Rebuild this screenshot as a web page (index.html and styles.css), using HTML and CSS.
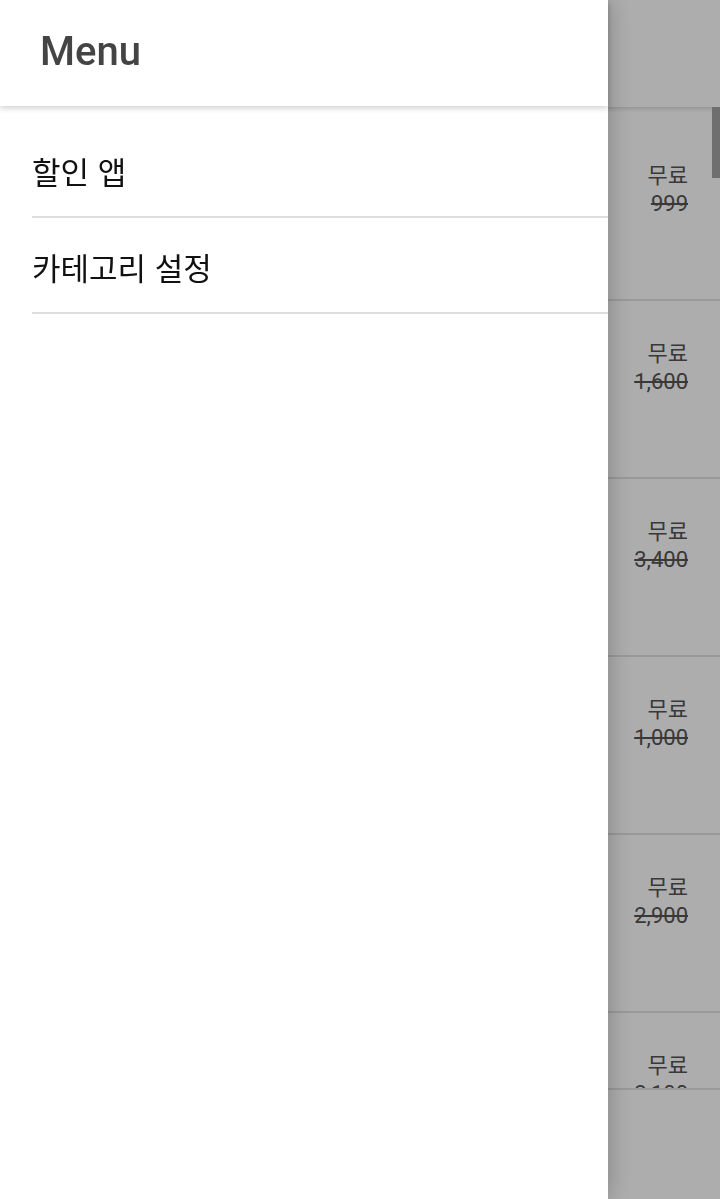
FILE: index.html
```html
<!DOCTYPE html>
<html lang="ko">
<head>
    <meta charset="UTF-8">
    <meta name="viewport" content="width=device-width, initial-scale=1.0">
    <title>Menu</title>
    <link rel="stylesheet" href="styles.css">
</head>
<body>
    <div class="app">
        <header class="app-bar"></header>
        <div class="deal-list">
            <div class="deal-row"><div class="price"><span class="now">무료</span><s class="was">999</s></div></div>
            <div class="deal-row"><div class="price"><span class="now">무료</span><s class="was">1,600</s></div></div>
            <div class="deal-row"><div class="price"><span class="now">무료</span><s class="was">3,400</s></div></div>
            <div class="deal-row"><div class="price"><span class="now">무료</span><s class="was">1,000</s></div></div>
            <div class="deal-row"><div class="price"><span class="now">무료</span><s class="was">2,900</s></div></div>
            <div class="deal-row"><div class="price"><span class="now">무료</span><s class="was">2,100</s></div></div>
        </div>
        <div class="scroll-thumb"></div>
        <footer class="bottom-bar"></footer>
    </div>

    <div class="scrim"></div>

    <nav class="drawer">
        <div class="drawer-header">Menu</div>
        <ul class="drawer-list">
            <li class="drawer-item">할인 앱</li>
            <li class="drawer-item">카테고리 설정</li>
        </ul>
    </nav>
</body>
</html>
```

FILE: styles.css
```css
body {
    margin: 0;
    background: #fff;
    font-family: Roboto, "Noto Sans CJK KR", sans-serif;
    overflow: hidden;
    height: 1199px;
}

.app {
    height: 1199px;
    overflow: hidden;
}

.app-bar {
    height: 107px;
    background: #fff;
    box-shadow: 0 2px 4px rgba(0, 0, 0, 0.15);
    position: relative;
    z-index: 1;
}

.deal-list {
    padding-top: 16px;
}

.deal-row {
    height: 178px;
    box-sizing: border-box;
    border-bottom: 2px solid #e2e2e2;
    display: flex;
    justify-content: flex-end;
    padding: 39px 32px 0 0;
}

.price {
    display: flex;
    flex-direction: column;
    align-items: flex-end;
    font-size: 22px;
    line-height: 28px;
    color: #555;
}

.was {
    text-decoration: line-through;
}

.scroll-thumb {
    position: fixed;
    top: 107px;
    right: 0;
    width: 8px;
    height: 71px;
    background: #a4a4a4;
    z-index: 1;
}

.bottom-bar {
    position: fixed;
    left: 0;
    right: 0;
    bottom: 0;
    height: 109px;
    background: #fff;
    border-top: 2px solid #e2e2e2;
    z-index: 1;
}

.scrim {
    position: fixed;
    top: 0;
    left: 0;
    right: 0;
    bottom: 0;
    background: rgba(0, 0, 0, 0.32);
    z-index: 5;
}

.drawer {
    position: fixed;
    top: 0;
    left: 0;
    bottom: 0;
    width: 608px;
    background: #fff;
    box-shadow: 0 0 24px rgba(0, 0, 0, 0.26);
    z-index: 6;
}

.drawer-header {
    height: 106px;
    box-sizing: border-box;
    padding: 0 0 4px 40px;
    display: flex;
    align-items: center;
    font-size: 40px;
    font-weight: 500;
    color: #444;
    box-shadow: 0 2px 6px rgba(0, 0, 0, 0.2);
    position: relative;
}

.drawer-list {
    list-style: none;
    margin: 0;
    padding: 16px 0 0 32px;
}

.drawer-item {
    height: 96px;
    box-sizing: border-box;
    border-bottom: 2px solid #ddd;
    display: flex;
    align-items: center;
    padding-top: 2px;
    font-family: "Noto Sans CJK KR", sans-serif;
    font-size: 31px;
    color: #111;
}
```
